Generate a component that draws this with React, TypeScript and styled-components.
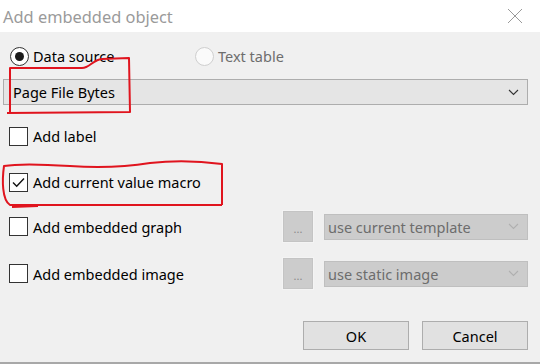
import styled, { createGlobalStyle } from "styled-components";

const GlobalStyle = createGlobalStyle`
  html, body {
    margin: 0;
    padding: 0;
    background: #f0f0f0;
  }
  body {
    font-family: "Noto Sans", "Open Sans", "Liberation Sans", sans-serif;
  }
`;

const Window = styled.div`
  position: relative;
  width: 540px;
  height: 364px;
  display: flex;
  flex-direction: column;
  overflow: hidden;
  background: #f0f0f0;
`;

const TitleBar = styled.div`
  height: 32px;
  flex: none;
  background: #ffffff;
  display: flex;
  align-items: center;
  justify-content: space-between;
  padding: 0 17px 0 3px;
`;

const Title = styled.span`
  font-size: 16.4px;
  color: #9a9a9a;
`;

const Body = styled.div`
  flex: 1;
  display: flex;
  flex-direction: column;
  padding: 0 12px 0 3px;
  border-bottom: 2px solid #a8a8a8;
  font-size: 14.5px;
  color: #000;
`;

const Row = styled.div<{ $mt: number; $h: number }>`
  margin-top: ${(p) => p.$mt}px;
  height: ${(p) => p.$h}px;
  display: flex;
  align-items: center;
  padding-left: 6px;
`;

const RadioItem = styled.label<{ $w?: number; $disabled?: boolean }>`
  display: flex;
  align-items: center;
  gap: 4px;
  width: ${(p) => (p.$w ? `${p.$w}px` : "auto")};
  color: ${(p) => (p.$disabled ? "#6d6d6d" : "#000")};
  padding-left: ${(p) => (p.$w ? "1px" : "0")};
`;

const RadioCircle = styled.span<{ $checked?: boolean; $disabled?: boolean }>`
  width: 17px;
  height: 17px;
  border-radius: 50%;
  border: 1px solid ${(p) => (p.$disabled ? "#cfcfcf" : "#333")};
  background: ${(p) => (p.$disabled ? "#fafafa" : "#fff")};
  display: flex;
  align-items: center;
  justify-content: center;
  &::after {
    content: "";
    display: ${(p) => (p.$checked ? "block" : "none")};
    width: 9px;
    height: 9px;
    border-radius: 50%;
    background: #1a1a1a;
  }
`;

const Dropdown = styled.div`
  height: 26px;
  box-sizing: border-box;
  margin-top: 11px;
  background: #e5e5e5;
  border: 1px solid #adadad;
  display: flex;
  align-items: center;
  justify-content: space-between;
  padding: 0 8px 0 9px;
`;

const CheckLabel = styled.label`
  display: flex;
  align-items: center;
  gap: 5px;
  flex: 1;
`;

const CheckBox = styled.span`
  width: 17px;
  height: 17px;
  border: 1px solid #333;
  background: #fff;
  display: flex;
  align-items: center;
  justify-content: center;
`;

const DotsButton = styled.div`
  width: 32px;
  height: 33px;
  box-sizing: border-box;
  background: #cccccc;
  border: 1px solid #f4f4f4;
  outline: 1px solid #c4c4c4;
  outline-offset: -2px;
  color: #8a8a8a;
  font-size: 11px;
  display: flex;
  align-items: center;
  justify-content: center;
  padding-top: 3px;
  margin-right: 10px;
`;

const DisabledSelect = styled.div`
  width: 204px;
  height: 26px;
  box-sizing: border-box;
  background: #cccccc;
  border: 1px solid #bfbfbf;
  color: #6d6d6d;
  display: flex;
  align-items: center;
  justify-content: space-between;
  padding: 0 8px 0 3px;
`;

const Footer = styled.div`
  margin-top: 31px;
  display: flex;
  justify-content: flex-end;
  gap: 13px;
`;

const Button = styled.button`
  width: 106px;
  height: 29px;
  box-sizing: border-box;
  background: #e1e1e1;
  border: 1px solid #adadad;
  font-family: inherit;
  font-size: 14.5px;
  color: #000;
  padding: 0;
`;

const Annotations = styled.svg`
  position: absolute;
  left: 0;
  top: 0;
  pointer-events: none;
`;

const Chevron = ({ color }: { color: string }) => (
  <svg width="11" height="7" viewBox="0 0 11 7">
    <path d="M1 1 L5.5 5.5 L10 1" fill="none" stroke={color} strokeWidth="1.1" />
  </svg>
);

const CloseIcon = () => (
  <svg width="16" height="16" viewBox="0 0 16 16">
    <path d="M1 1 L15 15 M15 1 L1 15" stroke="#9a9a9a" strokeWidth="1" />
  </svg>
);

const Tick = () => (
  <svg width="15" height="15" viewBox="0 0 15 15">
    <path d="M2 7.5 L5.7 11.2 L13 3.5" fill="none" stroke="#111" strokeWidth="1.4" />
  </svg>
);

const embedRows = [
  { label: "Add embedded graph", value: "use current template", mt: 16 },
  { label: "Add embedded image", value: "use static image", mt: 14 },
];

export default function App() {
  return (
    <>
      <GlobalStyle />
      <Window>
        <TitleBar>
          <Title>Add embedded object</Title>
          <CloseIcon />
        </TitleBar>
        <Body>
          <Row $mt={12} $h={24}>
            <RadioItem $w={185}>
              <RadioCircle $checked />
              Data source
            </RadioItem>
            <RadioItem $disabled>
              <RadioCircle $disabled />
              Text table
            </RadioItem>
          </Row>
          <Dropdown>
            <span>Page File Bytes</span>
            <Chevron color="#333" />
          </Dropdown>
          <Row $mt={19} $h={24}>
            <CheckLabel>
              <CheckBox />
              Add label
            </CheckLabel>
          </Row>
          <Row $mt={22} $h={24}>
            <CheckLabel>
              <CheckBox>
                <Tick />
              </CheckBox>
              Add current value macro
            </CheckLabel>
          </Row>
          {embedRows.map((r) => (
            <Row key={r.label} $mt={r.mt} $h={33}>
              <CheckLabel>
                <CheckBox />
                {r.label}
              </CheckLabel>
              <DotsButton>...</DotsButton>
              <DisabledSelect>
                <span>{r.value}</span>
                <Chevron color="#b0b0b0" />
              </DisabledSelect>
            </Row>
          ))}
          <Footer>
            <Button>OK</Button>
            <Button>Cancel</Button>
          </Footer>
        </Body>
        <Annotations width="540" height="364" viewBox="0 0 540 364">
          <g fill="none" stroke="#e0141e" strokeWidth="2" strokeLinejoin="round">
            <path d="M10 113 L10 68 L82 68 C90 68 92 60 102 59 L129 58 L130 112 L7 113" />
            <path d="M222 205 L222 164 C200 161 175 160 150 163 C125 167 100 168 70 166 C40 164 15 164 4 166 C2 180 2 200 10 205 L222 205 M12 207 L38 206" />
          </g>
        </Annotations>
      </Window>
    </>
  );
}
